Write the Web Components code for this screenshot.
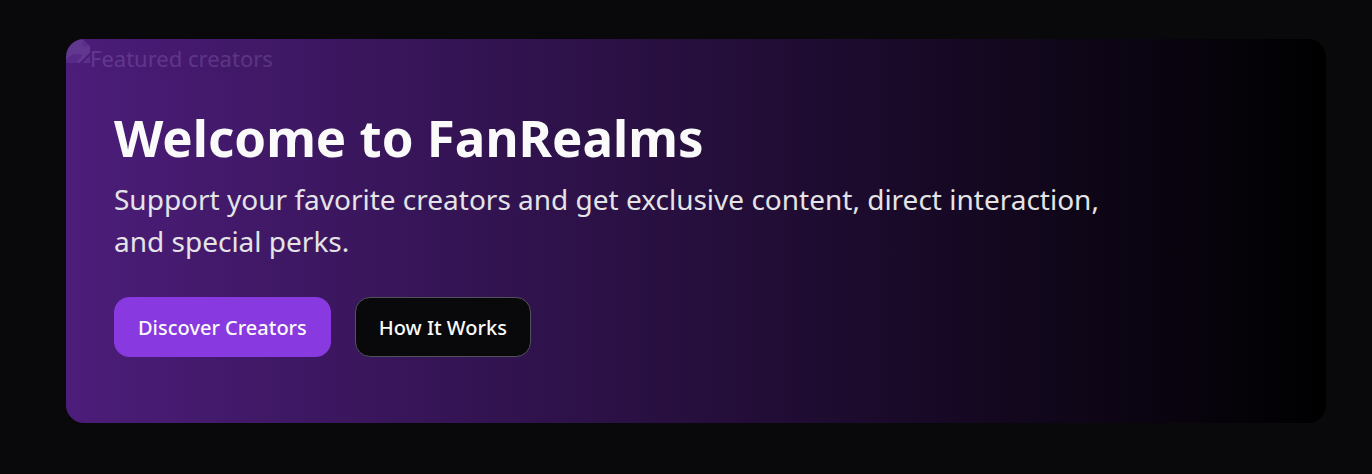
<!DOCTYPE html>
<html lang="en"><head><meta charset="utf-8"><title>FanRealms</title>
<style>body{margin:0;background:#09090b;color:#fafafa;font-family:"Segoe UI","Noto Sans","Open Sans",sans-serif}</style></head>
<body>
<hero-banner>
<broken-picture slot="media" label="Featured creators"></broken-picture>
<span slot="title">Welcome to FanRealms</span>
<span slot="text">Support your favorite creators and get exclusive content, direct interaction, and special perks.</span>
<action-button slot="actions" variant="primary">Discover Creators</action-button>
<action-button slot="actions">How It Works</action-button>
</hero-banner>
<script>
class HeroBanner extends HTMLElement{constructor(){super();this.attachShadow({mode:"open"}).innerHTML=`
<style>
:host{display:block;padding:39px 46px 51px 66px}
section{position:relative;overflow:hidden;border-radius:18px;padding:65px 48px 66px;background:linear-gradient(to right,#4c1d7a,#000)}
.media{position:absolute;inset:0;opacity:.2}
.content{position:relative}
h1{margin:0;font-size:51px;line-height:66px;font-weight:700}
p{margin:8px 0 35px;max-width:1008px;font-size:28px;line-height:42px;color:#e4e4e7}
.actions{display:flex;flex-wrap:wrap;gap:24px}
</style>
<section><div class="media"><slot name="media"></slot></div>
<div class="content"><h1><slot name="title"></slot></h1><p><slot name="text"></slot></p><div class="actions"><slot name="actions"></slot></div></div></section>`}}
class BrokenPicture extends HTMLElement{constructor(){super();this.attachShadow({mode:"open"}).innerHTML=`
<style>:host{display:flex;font-size:22px;line-height:38px;color:#c8a4e8}svg{width:24px;height:24px;flex:none}</style>
<svg viewBox="0 0 16 16" aria-hidden="true"><path fill="#b9a0ec" d="M0 0h11l5 5v4L9 16H0z"/><path fill="#8a62c4" d="M0 16v-2c2-3 5-4 7-4 2 0 3 0 4 1l-4 5z"/><path fill="#9470d0" d="M11 0l5 5h-5z"/><path fill="#9d7cd0" d="M16 11v5h-5z"/></svg><span></span>`;
this.shadowRoot.querySelector("span").textContent=this.getAttribute("label")}}
class ActionButton extends HTMLElement{constructor(){super();this.attachShadow({mode:"open"}).innerHTML=`
<style>:host{display:block}button{box-sizing:border-box;height:60px;padding:2px 23px 0;border:1px solid #52525b;border-radius:15px;background:#09090b;color:#fafafa;font:500 20px/30px "Segoe UI","Noto Sans","Open Sans",sans-serif;cursor:pointer}
:host([variant=primary]) button{background:#8839df;border-color:#8839df}</style><button type="button"><slot></slot></button>`}}
customElements.define("hero-banner",HeroBanner);customElements.define("broken-picture",BrokenPicture);customElements.define("action-button",ActionButton);
</script></body></html>
